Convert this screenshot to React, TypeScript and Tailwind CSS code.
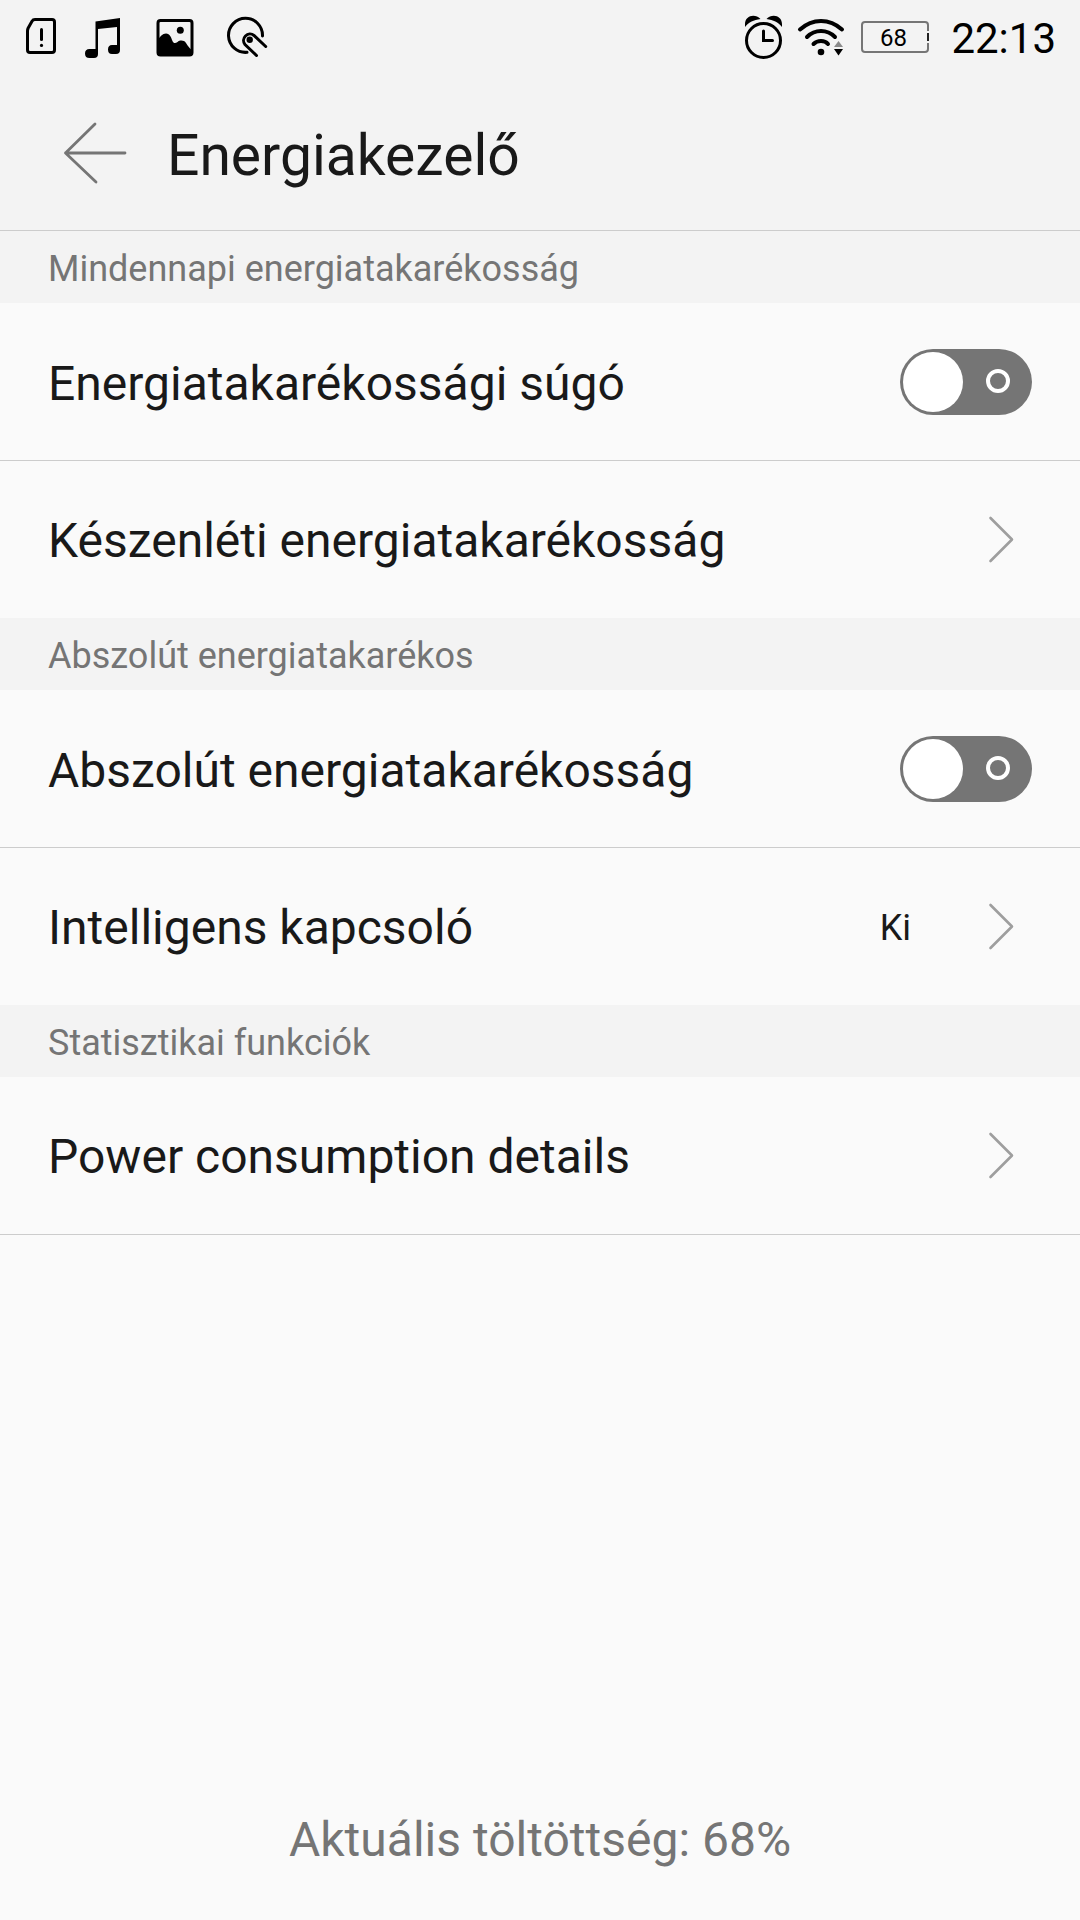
import { useState } from 'react';
import type { ReactNode } from 'react';

function SimIcon() {
  return (
    <svg viewBox="20 14 40 48" className="w-10 h-12" fill="none" stroke="#000" strokeWidth="3" strokeLinejoin="round" strokeLinecap="round" aria-hidden="true">
      <path d="M36 19.5H52Q54.5 19.5 54.5 22V50Q54.5 52.5 52 52.5H30Q27.5 52.5 27.5 50V31Q27.5 29.5 28.2 28L32 21.2Q33 19.5 35 19.5Z" />
      <path d="M41.5 29.5V39.5" />
      <circle cx="41.5" cy="45.4" r="1.6" fill="#000" stroke="none" />
    </svg>
  );
}

function MusicIcon() {
  return (
    <svg viewBox="84 14 40 48" className="w-10 h-12" fill="#000" aria-hidden="true">
      <path d="M95.5 21.6L120 18V50Q120 54 116 54H112Q108 54 108 49.5Q108 45 112 45H117V27L98 29V54Q98 58 94 58H89.5Q85 58 85 53.5Q85 49 89.5 49H95.5Z" />
    </svg>
  );
}

function ImageIcon() {
  return (
    <svg viewBox="148 14 52 48" className="w-[52px] h-12" aria-hidden="true">
      <rect x="158" y="20.5" width="34" height="34.5" rx="2.5" fill="none" stroke="#000" strokeWidth="3" />
      <circle cx="180.3" cy="30.3" r="3.5" />
      <path d="M158 39.5C160 37 162.500 33.5 166 33.5C170 33.5 171 37.5 172.5 41C173.5 43.5 175.5 43.5 177.5 42C180 40 184 40 186 43C188 46 189.5 48.5 192 50V55H158Z" />
    </svg>
  );
}

function TouchIcon() {
  return (
    <svg viewBox="224 14 46 48" className="w-[46px] h-12" fill="none" stroke="#000" strokeWidth="3" strokeLinecap="round" aria-hidden="true">
      <path d="M262.5 36A17 17 0 1 0 247 52.3" />
      <path d="M265.7 46.5L254 35.5A6.4 6.4 0 0 0 245 44.5L256.5 55.5" />
      <circle cx="249.7" cy="39.8" r="3.2" fill="#000" stroke="none" />
    </svg>
  );
}

function AlarmIcon() {
  return (
    <svg viewBox="742 14 42 48" className="w-[42px] h-12" aria-hidden="true">
      <circle cx="762.5" cy="40.5" r="17" fill="none" stroke="#000" strokeWidth="3" />
      <path d="M744 27V24C744 15.5 754 13 759.5 19C752.5 20 748 22 744 27Z" />
      <path d="M781 27V24C781 15.5 771 13 765.5 19C772.5 20 777 22 781 27Z" />
      <path d="M762.5 31V40.6H771.5" fill="none" stroke="#000" strokeWidth="3" strokeLinecap="round" />
    </svg>
  );
}

function WifiIcon() {
  return (
    <svg viewBox="796 14 50 48" className="w-[50px] h-12" aria-hidden="true">
      <g fill="none" stroke="#000" strokeWidth="4" strokeLinecap="round">
        <path d="M799 29.5Q808.5 21 820 21T841 29.5" />
        <path d="M806 37Q812 31 820 31T834 37" />
        <path d="M812.5 44Q815.5 41 820 41T827 44" />
      </g>
      <circle cx="820" cy="52" r="3.3" />
      <path d="M833 47H842L837.5 41Z" fill="#8a8a8a" />
      <path d="M833 49H842L837.5 55.5Z" />
    </svg>
  );
}

function Battery({ level }: { level: number }) {
  return (
    <div className="relative grid place-items-center w-[72px] h-12 pr-1">
      <svg viewBox="858 14 72 48" className="absolute inset-0 w-full h-full" fill="none" strokeWidth="2" aria-hidden="true">
        <path d="M927 31V25Q927 22 924 22H864Q861 22 861 25V49Q861 52 864 52H924Q927 52 927 49V43" stroke="#757575" />
        <path d="M927 33V41" stroke="#222" />
      </svg>
      <span className="relative text-2xl leading-6">{level}</span>
    </div>
  );
}

function Chevron() {
  return (
    <svg viewBox="0 0 48 48" className="w-12 h-12 shrink-0" fill="none" stroke="#9e9e9e" strokeWidth="2.6" strokeLinecap="round" strokeLinejoin="round" aria-hidden="true">
      <path d="M6.500 2L28 23.5L6.500 45" />
    </svg>
  );
}

function Section({ title, children }: { title: string; children: ReactNode }) {
  return (
    <section>
      <h2 className="h-[72px] flex items-center px-12 pt-1 bg-[#f3f3f3] text-4xl font-normal text-[#757575]">{title}</h2>
      {children}
    </section>
  );
}

interface RowProps {
  label: string;
  divider?: boolean;
}

function SwitchRow({ label, divider }: RowProps) {
  const [on, setOn] = useState(false);

  return (
    <label className={`flex items-center justify-between px-12 cursor-pointer ${divider ? 'border-b border-[#cccccc]' : ''}`}>
      <span className="h-[157px] flex items-center pt-1 text-5xl">{label}</span>
      <span className="relative w-[132px] h-[66px] shrink-0">
        <input
          type="checkbox"
          role="switch"
          checked={on}
          onChange={(e) => setOn(e.target.checked)}
          className="peer appearance-none block w-full h-full rounded-full bg-[#757575] checked:bg-[#2fb457] cursor-pointer"
        />
        <span className="absolute left-[3px] top-[3px] w-[60px] h-[60px] rounded-full bg-white pointer-events-none peer-checked:left-[69px]" />
        <span className="absolute right-[22px] top-5 w-6 h-6 rounded-full border-4 border-white pointer-events-none peer-checked:hidden" />
      </span>
    </label>
  );
}

function LinkRow({ label, value, divider }: RowProps & { value?: string }) {
  return (
    <button type="button" className={`w-full flex items-center px-12 text-left cursor-pointer ${divider ? 'border-b border-[#cccccc]' : ''}`}>
      <span className="h-[157px] flex-1 flex items-center pt-0.5 text-5xl">{label}</span>
      {value && <span className="mr-[73px] pt-0.5 text-4xl">{value}</span>}
      <Chevron />
    </button>
  );
}

export default function App() {
  const level = 68;

  return (
    <div className="min-h-screen flex flex-col bg-[#fafafa] text-[#191919] font-[Roboto,sans-serif]">
      <div className="h-[76px] flex items-center justify-between pl-5 pr-6 bg-[#f3f3f3] text-black">
        <div className="flex items-center gap-6">
          <SimIcon />
          <MusicIcon />
          <ImageIcon />
          <TouchIcon />
        </div>
        <div className="flex items-center gap-3">
          <AlarmIcon />
          <WifiIcon />
          <Battery level={level} />
          <span className="ml-2 pt-0.5 text-[42px] leading-[48px]">22:13</span>
        </div>
      </div>

      <header className="h-[155px] flex items-center gap-[37px] pl-[60px] pr-12 bg-[#f3f3f3] border-b border-[#cccccc]">
        <button type="button" aria-label="Vissza" className="cursor-pointer">
          <svg viewBox="60 119 70 68" className="w-[70px] h-[68px]" fill="none" stroke="#757575" strokeWidth="2.8" strokeLinecap="round" strokeLinejoin="round" aria-hidden="true">
            <path d="M95 124L65.5 153L96 182M65.5 153H125" />
          </svg>
        </button>
        <h1 className="pt-1.5 text-[57px] leading-[68px] font-normal">Energiakezelő</h1>
      </header>

      <main className="flex-1">
        <Section title="Mindennapi energiatakarékosság">
          <SwitchRow label="Energiatakarékossági súgó" divider />
          <LinkRow label="Készenléti energiatakarékosság" />
        </Section>
        <Section title="Abszolút energiatakarékos">
          <SwitchRow label="Abszolút energiatakarékosság" divider />
          <LinkRow label="Intelligens kapcsoló" value="Ki" />
        </Section>
        <Section title="Statisztikai funkciók">
          <LinkRow label="Power consumption details" divider />
        </Section>
      </main>

      <footer className="pb-12 text-center text-5xl leading-[64px] text-[#757575]">Aktuális töltöttség: {level}%</footer>
    </div>
  );
}
